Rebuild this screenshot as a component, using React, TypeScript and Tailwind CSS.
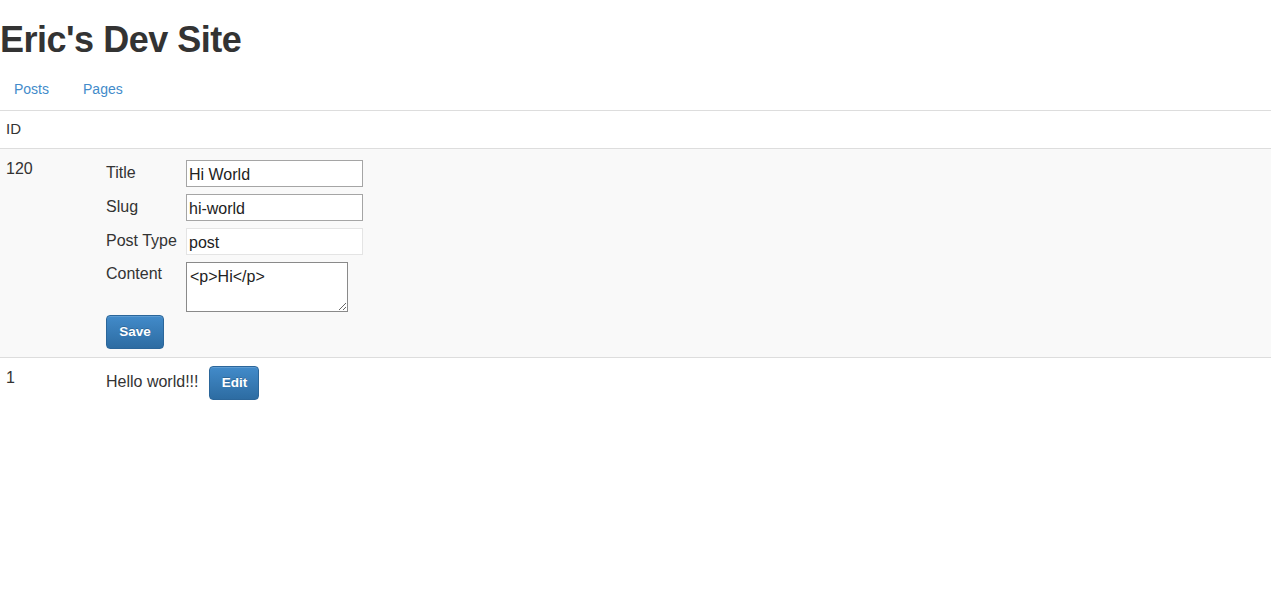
import React from "react";

const font = { fontFamily: '"Liberation Sans", Arial, Helvetica, sans-serif' };

function Btn({ label, w }: { label: string; w: string }) {
  return (
    <button
      className={`${w} h-[34px] rounded-[4px] border border-[#2b669a] bg-gradient-to-b from-[#428bca] to-[#2d6ca2] text-white text-[13.5px] font-bold leading-[20px] [text-shadow:0_-1px_0_rgba(0,0,0,0.2)] shadow-[inset_0_1px_0_rgba(255,255,255,0.15)]`}
    >
      {label}
    </button>
  );
}

export default function App() {
  return (
    <div className="bg-white text-[#333] min-h-[597px]" style={font}>
      <h1 className="pt-[20px] text-[36px] leading-[40px] font-bold tracking-[-0.5px] mb-[10px]">
        Eric's Dev Site
      </h1>
      <nav className="flex text-[14px] leading-[20px] text-[#428bca]">
        <a className="px-[14px] pt-[9px] pb-[11px]">Posts</a>
        <a className="px-[20px] pt-[9px] pb-[11px]">Pages</a>
      </nav>
      <div className="border-t border-[#ddd]">
        <div className="flex h-[38px] items-center text-[15px] border-b border-[#ddd]">
          <div className="pl-[6px] w-[106px]">ID</div>
        </div>
        <div className="flex bg-[#f9f9f9] border-b border-[#ddd] text-[16px] leading-[23px]">
          <div className="w-[106px] pl-[6px] pt-[8px]">120</div>
          <div className="pt-[11px] pb-[8px] flex flex-col">
            <div className="flex h-[27px] mb-[7px]">
              <label className="w-[80px] pt-[1px]">Title</label>
              <input
                className="w-[177px] h-[27px] border border-[#a5a5a5] bg-white px-[2px] pt-[2px] text-[16px] text-[#222] outline-none"
                defaultValue="Hi World"
              />
            </div>
            <div className="flex h-[27px] mb-[7px]">
              <label className="w-[80px] pt-[1px]">Slug</label>
              <input
                className="w-[177px] h-[27px] border border-[#a5a5a5] bg-white px-[2px] pt-[2px] text-[16px] text-[#222] outline-none"
                defaultValue="hi-world"
              />
            </div>
            <div className="flex h-[27px] mb-[7px]">
              <label className="w-[80px] pt-[1px]">Post Type</label>
              <input
                className="w-[177px] h-[27px] border border-[#e4e4e4] bg-white px-[2px] pt-[2px] text-[16px] text-[#222] outline-none"
                defaultValue="post"
              />
            </div>
            <div className="flex h-[50px] mb-[3px]">
              <label className="w-[80px]">Content</label>
              <textarea
                className="w-[162px] h-[50px] border border-[#8a8a8a] bg-white px-[3px] pt-[5px] text-[16px] leading-[18px] text-[#222] outline-none resize"
                defaultValue="<p>Hi</p>"
              />
            </div>
            <div className="flex">
              <Btn label="Save" w="w-[58px]" />
            </div>
          </div>
        </div>
        <div className="flex text-[16px] leading-[23px]">
          <div className="w-[106px] pl-[6px] pt-[8px]">1</div>
          <div className="pt-[8px] flex items-baseline gap-[11px]">
            <span>Hello world!!!</span>
            <Btn label="Edit" w="w-[50px]" />
          </div>
        </div>
      </div>
    </div>
  );
}
